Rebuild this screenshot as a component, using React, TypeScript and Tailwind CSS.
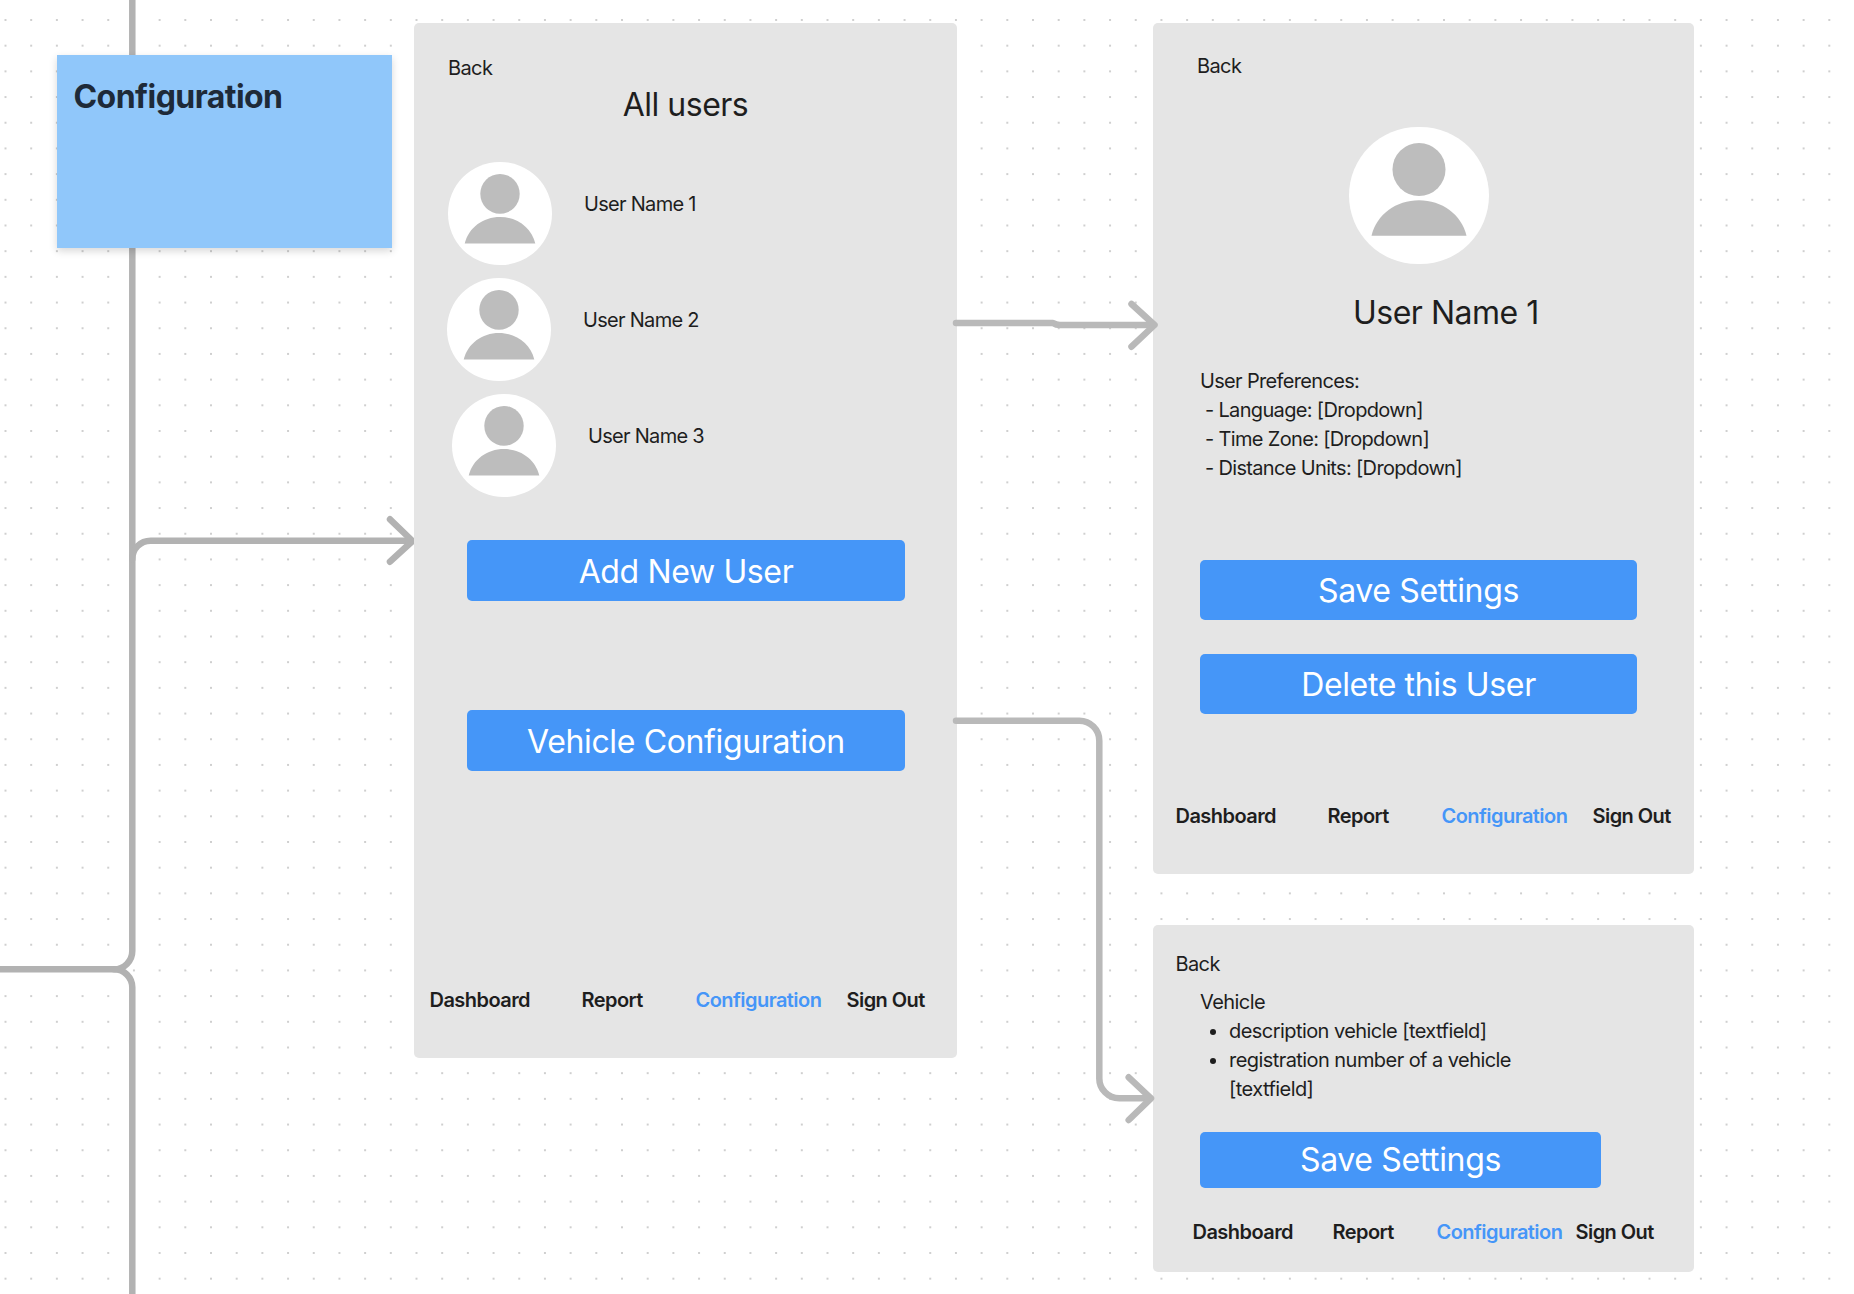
import React from "react";

function Avatar({ className }: { className: string }) {
  return (
    <div className={`shrink-0 rounded-full bg-white ${className}`}>
      <svg viewBox="0 0 104 103" preserveAspectRatio="none" className="block h-full w-full">
        <ellipse cx="52" cy="32" rx="19.7" ry="20" fill="#bdbdbd" />
        <path d="M16.7 82 C20.5 66 35 55.3 52 55.3 C69 55.3 83.5 66 87.3 82 Z" fill="#bdbdbd" />
      </svg>
    </div>
  );
}

function BlueButton({ label, className }: { label: string; className: string }) {
  return (
    <div className={`flex items-center justify-center rounded-[5px] bg-[#4596f8] text-[32px] leading-10 tracking-[-0.36px] text-white ${className}`}>
      {label}
    </div>
  );
}

function Nav({ className }: { className: string }) {
  return (
    <div className={`grid text-[20px] leading-[29px] font-semibold tracking-[-0.55px] ${className}`}>
      <span>Dashboard</span>
      <span>Report</span>
      <span className="text-[#4596f8]">Configuration</span>
      <span>Sign Out</span>
    </div>
  );
}

function UserRow({ name, className }: { name: string; className: string }) {
  return (
    <div className={`flex h-[102.5px] items-start gap-[32px] ${className}`}>
      <Avatar className="h-[102.5px] w-[104px]" />
      <span className="mt-[28px] text-[20px] leading-[29px] tracking-[-0.7px]">{name}</span>
    </div>
  );
}

function Connectors() {
  return (
    <svg className="pointer-events-none absolute top-0 left-0 z-0" width="1854" height="1294" fill="none" strokeLinecap="round" strokeLinejoin="round">
      <g stroke="#b2b2b2" strokeWidth="6.5">
        <path d="M132.3 -5 V951 A18.3 18.3 0 0 1 114 969.3 H-5" />
        <path d="M114 969.3 A18.3 18.3 0 0 1 132.3 987.6 V1300" />
        <path d="M132.3 559 A18.3 18.3 0 0 1 150.6 540.7 H411" />
        <path d="M390 519.3 L412.5 541 L390 561.7" />
      </g>
    </svg>
  );
}

function ConnectorsRight() {
  return (
    <svg className="pointer-events-none absolute top-0 left-0 z-20" width="1854" height="1294" fill="none" strokeLinecap="round" strokeLinejoin="round">
      <g stroke="#b9b9b9" strokeWidth="6.5">
        <path d="M956 323 H1053 Q1056 325 1060 325 H1153" />
        <path d="M1131.5 304 L1154.5 325 L1131.5 346.7" />
        <path d="M956 720.7 H1079 A20 20 0 0 1 1099.3 741 V1078 A20 20 0 0 0 1119.3 1098.3 H1150" />
        <path d="M1128.7 1077.3 L1151 1098.3 L1128.7 1120" />
      </g>
    </svg>
  );
}

export default function App() {
  return (
    <div className="relative h-[1294px] w-[1854px] overflow-hidden bg-white bg-[radial-gradient(circle,#cfcfcf_1px,transparent_1.2px)] bg-[size:25.7px_25.7px] bg-[position:-7.35px_7.15px] font-['Inter',sans-serif] text-[#1e1e1e]">
      <Connectors />

      <div className="absolute top-[55px] left-[57px] z-10 h-[193px] w-[334.5px] bg-[#90c7fa] pt-[22px] pl-[16.5px] shadow-[0_3px_8px_rgba(0,0,0,0.16)]">
        <h1 className="text-[32px] leading-10 font-bold tracking-[-0.55px] text-[#1e2a38]">Configuration</h1>
      </div>

      {/* All users */}
      <section className="absolute top-[23px] left-[414px] z-10 flex h-[1035px] w-[543px] flex-col rounded-[5px] bg-[#e5e5e5] pt-[31px] pb-[43.5px]">
        <div className="ml-[34px] text-[20px] leading-[29px] tracking-[-0.6px]">Back</div>
        <h2 className="mt-[2px] text-center text-[32px] leading-10 tracking-[-0.5px]">All users</h2>
        <div className="mt-[37px] flex flex-col gap-[13.5px]">
          <UserRow name="User Name 1" className="ml-[34px]" />
          <UserRow name="User Name 2" className="ml-[33px]" />
          <UserRow name="User Name 3" className="ml-[38px]" />
        </div>
        <BlueButton label="Add New User" className="mt-[43.5px] ml-[53px] h-[60.5px] w-[438px] pt-[3px]" />
        <BlueButton label="Vehicle Configuration" className="mt-[109.5px] ml-[53px] h-[60.5px] w-[438px] pt-[3px]" />
        <Nav className="mt-auto ml-[15.5px] grid-cols-[152px_114px_151px_auto]" />
      </section>

      {/* User details */}
      <section className="absolute top-[23px] left-[1153px] z-10 flex h-[851px] w-[541px] flex-col rounded-[5px] bg-[#e5e5e5] pt-[29px] pb-[43px]">
        <div className="ml-[44px] text-[20px] leading-[29px] tracking-[-0.6px]">Back</div>
        <Avatar className="mt-[46px] ml-[196px] h-[136.5px] w-[140px]" />
        <h2 className="mt-[29.5px] ml-[200px] text-[32px] leading-10 tracking-[-0.5px]">User Name 1</h2>
        <div className="mt-[33.5px] ml-[47px] text-[20px] leading-[29px] tracking-[-0.66px] whitespace-pre">
          <div>User Preferences:</div>
          <div> - Language: [Dropdown]</div>
          <div> - Time Zone: [Dropdown]</div>
          <div> - Distance Units: [Dropdown]</div>
        </div>
        <BlueButton label="Save Settings" className="mt-[77px] ml-[47px] h-[60px] w-[437px] pt-[2px]" />
        <BlueButton label="Delete this User" className="mt-[34px] ml-[47px] h-[60px] w-[437px] pt-[2px]" />
        <Nav className="mt-auto ml-[22.5px] grid-cols-[152px_114px_151px_auto]" />
      </section>

      {/* Vehicle */}
      <section className="absolute top-[925px] left-[1153px] z-10 flex h-[347px] w-[541px] flex-col rounded-[5px] bg-[#e5e5e5] pt-[25px] pb-[25px]">
        <div className="ml-[22.5px] text-[20px] leading-[29px] tracking-[-0.6px]">Back</div>
        <div className="mt-[9px] ml-[47px] w-[330px] text-[20px] leading-[29px] tracking-[-0.56px]">
          <div>Vehicle</div>
          <ul className="list-disc pl-[29px]">
            <li>description vehicle [textfield]</li>
            <li>registration number of a vehicle [textfield]</li>
          </ul>
        </div>
        <BlueButton label="Save Settings" className="mt-[27.5px] ml-[47px] h-[56px] w-[401px]" />
        <Nav className="mt-auto ml-[39.5px] grid-cols-[140px_104px_139px_auto]" />
      </section>

      <ConnectorsRight />
    </div>
  );
}
